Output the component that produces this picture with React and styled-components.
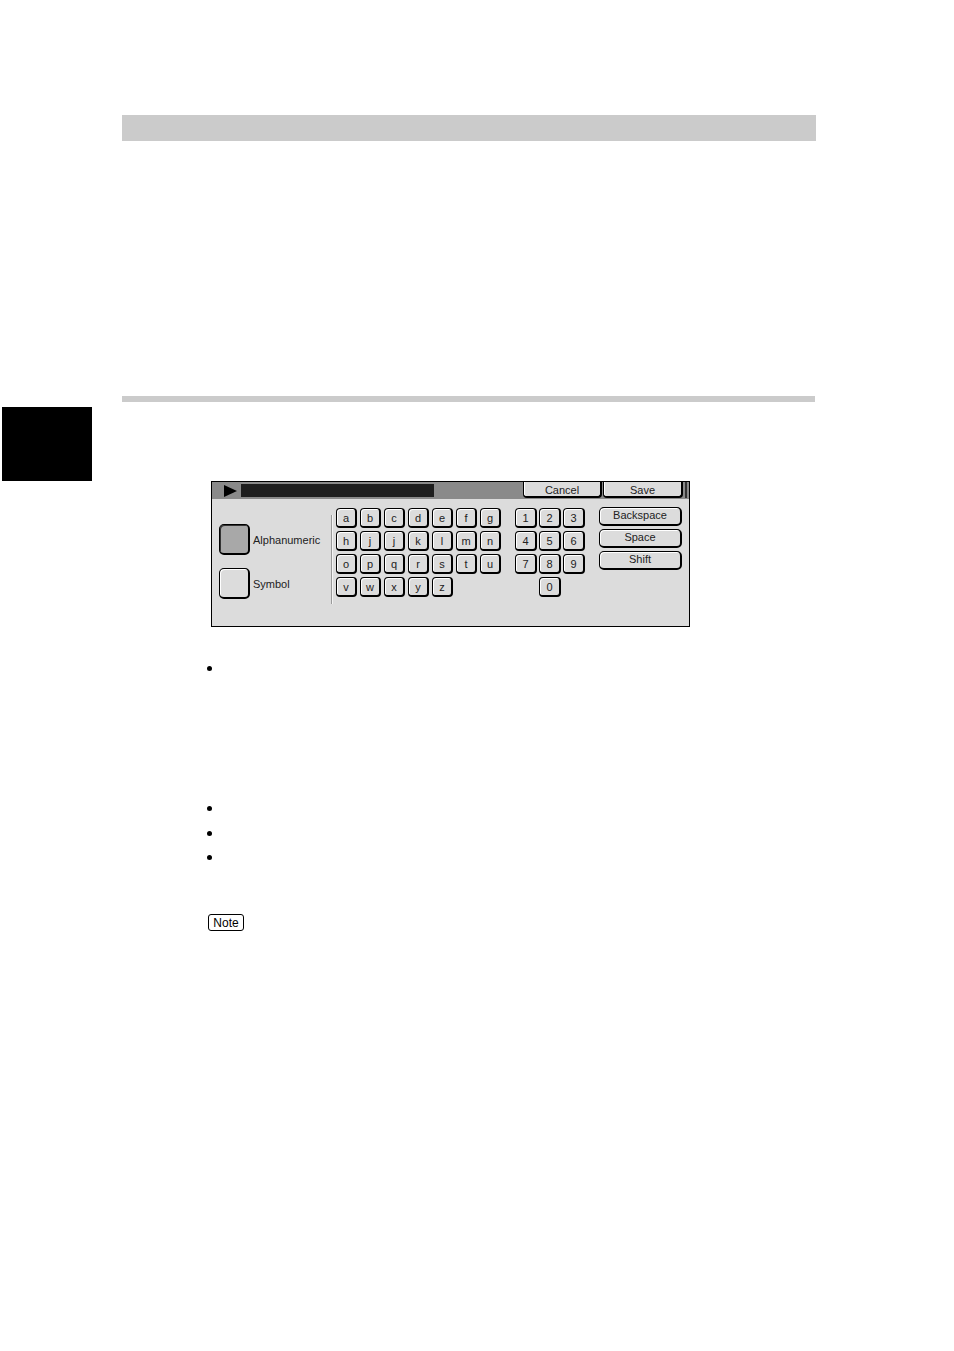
import React from 'react';
import styled, { createGlobalStyle } from 'styled-components';

const GlobalStyle = createGlobalStyle`
  body {
    margin: 0;
    background: #ffffff;
    font-family: "Liberation Sans", Arial, sans-serif;
  }
`;

const Page = styled.div`
  width: 954px;
  height: 1351px;
  padding-top: 115px;
  box-sizing: border-box;
`;

const TopBar = styled.div`
  margin-left: 122px;
  width: 694px;
  height: 26px;
  background: #cbcbcb;
`;

const Rule = styled.div`
  margin-left: 122px;
  margin-top: 255px;
  width: 693px;
  height: 6px;
  background: #cbcbcb;
`;

const ThumbTab = styled.div`
  margin-left: 2px;
  margin-top: 5px;
  width: 90px;
  height: 74px;
  background: #000;
`;

const Panel = styled.div`
  margin-left: 211px;
  width: 479px;
  height: 146px;
  box-sizing: border-box;
  border: 1px solid #000;
  background: #dcdcdc;
  display: flex;
  flex-direction: column;
`;

const Header = styled.div`
  height: 17px;
  background: #8a8a8a;
  display: flex;
  align-items: flex-start;
  padding-left: 12px;
  padding-right: 2px;
`;

const Arrow = styled.svg`
  width: 13px;
  height: 12px;
  margin-top: 3px;
  flex: none;
`;

const Field = styled.div`
  width: 193px;
  height: 13px;
  margin-top: 2px;
  margin-left: 4px;
  background: #1e1e1e;
`;

const HeaderButtons = styled.div`
  margin-left: auto;
  display: flex;
  gap: 1px;
  padding-right: 2px;
  border-right: 2px solid #333;
`;

const HeaderButton = styled.div`
  width: ${p => p.w}px;
  height: 16px;
  box-sizing: border-box;
  background: #dcdcdc;
  border: 1px solid #000;
  border-top: none;
  border-right-width: 2px;
  border-bottom-width: 2px;
  border-radius: 0 0 4px 4px;
  box-shadow: inset 1px 0 0 #fff;
  font-size: 11px;
  color: #222;
  display: flex;
  align-items: center;
  justify-content: center;
  padding-top: 1px;
`;

const Body = styled.div`
  flex: 1;
  display: flex;
  align-items: flex-start;
`;

const ModeCol = styled.div`
  width: 119px;
  padding-left: 7px;
  padding-top: 25px;
  box-sizing: border-box;
  display: flex;
  flex-direction: column;
  gap: 13px;
`;

const ModeRow = styled.div`
  display: flex;
  align-items: center;
  gap: 3px;
  font-size: 11px;
  color: #222;
`;

const ModeButton = styled.div`
  width: 31px;
  height: 31px;
  box-sizing: border-box;
  border: 1px solid #000;
  border-right-width: 2px;
  border-bottom-width: 2px;
  border-radius: 5px;
  background: ${p => (p.active ? '#a8a8a8' : '#dcdcdc')};
  box-shadow: ${p => (p.active ? 'inset 1px 1px 0 #333' : 'inset 1px 1px 0 #fff')};
`;

const Divider = styled.div`
  width: 1px;
  height: 89px;
  margin-top: 16px;
  background: #9a9a9a;
  box-shadow: 1px 0 0 #f4f4f4;
`;

const KeyGrid = styled.div`
  display: grid;
  grid-template-columns: repeat(${p => p.cols}, ${p => p.kw}px);
  grid-auto-rows: 20px;
  column-gap: ${p => p.gap}px;
  row-gap: 3px;
  margin-left: ${p => p.ml}px;
  margin-top: 9px;
`;

const Key = styled.div`
  grid-column: ${p => p.col || 'auto'};
  box-sizing: border-box;
  border: 1px solid #000;
  border-right-width: 2px;
  border-bottom-width: 2px;
  border-radius: 4px;
  background: #dcdcdc;
  box-shadow: inset 1px 1px 0 #fff;
  font-size: 11px;
  color: #222;
  display: flex;
  align-items: center;
  justify-content: center;
`;

const ActionCol = styled.div`
  margin-left: 14px;
  margin-top: 8px;
  display: flex;
  flex-direction: column;
  gap: 3px;
`;

const ActionButton = styled(Key)`
  width: 83px;
  height: 19px;
  border-radius: 5px;
  padding-bottom: 2px;
`;

const Bullet = styled.div`
  margin-left: 207px;
  margin-top: ${p => p.mt}px;
  width: 5px;
  height: 5px;
  border-radius: 50%;
  background: #000;
`;

const NoteBadge = styled.div`
  margin-left: 208px;
  margin-top: 54px;
  width: 36px;
  height: 17px;
  box-sizing: border-box;
  border: 1px solid #000;
  border-radius: 3px;
  font-size: 12px;
  color: #000;
  display: flex;
  align-items: center;
  justify-content: center;
`;

const letterKeys = ['a','b','c','d','e','f','g','h','j','j','k','l','m','n','o','p','q','r','s','t','u','v','w','x','y','z'];
const numberKeys = ['1','2','3','4','5','6','7','8','9'];

export default function App() {
  return (
    <>
      <GlobalStyle />
      <Page>
        <TopBar />
        <Rule />
        <ThumbTab />
        <Panel>
          <Header>
            <Arrow viewBox="0 0 13 12">
              <polygon points="0,0 13,6 0,12" fill="#000" />
            </Arrow>
            <Field />
            <HeaderButtons>
              <HeaderButton w={79}>Cancel</HeaderButton>
              <HeaderButton w={80}>Save</HeaderButton>
            </HeaderButtons>
          </Header>
          <Body>
            <ModeCol>
              <ModeRow>
                <ModeButton active />
                Alphanumeric
              </ModeRow>
              <ModeRow>
                <ModeButton />
                Symbol
              </ModeRow>
            </ModeCol>
            <Divider />
            <KeyGrid cols={7} kw={21} gap={3} ml={4}>
              {letterKeys.map((k, i) => (
                <Key key={i}>{k}</Key>
              ))}
            </KeyGrid>
            <KeyGrid cols={3} kw={22} gap={2} ml={14}>
              {numberKeys.map(k => (
                <Key key={k}>{k}</Key>
              ))}
              <Key col={2}>0</Key>
            </KeyGrid>
            <ActionCol>
              <ActionButton>Backspace</ActionButton>
              <ActionButton>Space</ActionButton>
              <ActionButton>Shift</ActionButton>
            </ActionCol>
          </Body>
        </Panel>
        <Bullet mt={39} />
        <Bullet mt={135} />
        <Bullet mt={20} />
        <Bullet mt={19} />
        <NoteBadge>Note</NoteBadge>
      </Page>
    </>
  );
}
